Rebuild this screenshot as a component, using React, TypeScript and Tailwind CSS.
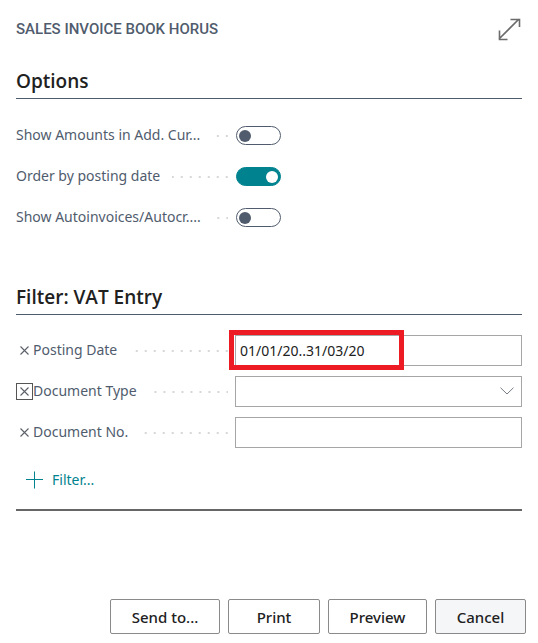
import { useState } from "react";

type Option = { id: string; label: string; on: boolean };

const INITIAL_OPTIONS: Option[] = [
  { id: "addCurrency", label: "Show Amounts in Add. Cur...", on: false },
  { id: "orderByDate", label: "Order by posting date", on: true },
  { id: "autoinvoices", label: "Show Autoinvoices/Autocr....", on: false },
];

const DOCUMENT_TYPES = ["", "Payment", "Invoice", "Credit Memo"];

function Leader() {
  return (
    <span className="mr-[7px] ml-3 h-[2px] min-w-0 flex-1 bg-[linear-gradient(to_left,#d6d7d9_2px,transparent_2px)] bg-[length:9px_2px] bg-right bg-repeat-x" />
  );
}

function SectionTitle({ children }: { children: string }) {
  return (
    <h2 className="border-b border-[#505c6d] pt-px pb-[3px] font-['Open_Sans',sans-serif] text-[19px] leading-7 font-semibold text-[#212121]">
      {children}
    </h2>
  );
}

type FilterLabelProps = {
  htmlFor: string;
  label: string;
  focused?: boolean;
  onClear: () => void;
};

function FilterLabel({ htmlFor, label, focused, onClear }: FilterLabelProps) {
  return (
    <div className="flex items-center">
      <button
        type="button"
        aria-label={`Remove ${label} filter`}
        onClick={onClear}
        className={`flex size-[17px] shrink-0 items-center justify-center border ${
          focused ? "border-[#555555]" : "border-transparent"
        }`}
      >
        <svg viewBox="0 0 9 9" className="size-[9px]" fill="none" stroke="#5c6169" strokeWidth="1.1">
          <path d="M.5 .5l8 8M8.5 .5l-8 8" />
        </svg>
      </button>
      <label htmlFor={htmlFor} className={labelClass}>
        {label}
      </label>
      <Leader />
    </div>
  );
}

const labelClass = "pb-[2px] whitespace-nowrap";
const rowClass = "grid grid-cols-[219px_minmax(0,1fr)]";
const fieldClass =
  "block h-[31px] w-full appearance-none rounded-none border border-[#a6a6a6] bg-white px-1 text-[#212121] outline-none";
const buttonClass =
  "h-[35px] rounded-xs border border-[#8a8a8a] text-[15px] font-medium text-[#212121]";

export default function App() {
  const [options, setOptions] = useState(INITIAL_OPTIONS);
  const [postingDate, setPostingDate] = useState("01/01/20..31/03/20");
  const [documentType, setDocumentType] = useState("");
  const [documentNo, setDocumentNo] = useState("");

  const toggle = (id: string) => {
    setOptions((prev) =>
      prev.map((option) =>
        option.id === id ? { ...option, on: !option.on } : option
      )
    );
  };

  return (
    <main className="min-h-screen bg-white px-4 pt-4 font-['Noto_Sans',sans-serif] text-[14px] leading-5 text-[#505c6d]">
      <header className="flex items-center justify-between">
        <h1 className="font-[Roboto,sans-serif] text-[15px] font-medium">
          SALES INVOICE BOOK HORUS
        </h1>
        <button type="button" aria-label="Expand" className="p-[1px]">
          <svg viewBox="0 0 24 24" className="size-6" fill="none" stroke="#6b6b6b" strokeWidth="1.6">
            <path d="M2 22L22 2M13.500 2.500h9V10M2.500 13.500v9H10.500" />
          </svg>
        </button>
      </header>

      <section className="mt-6">
        <SectionTitle>Options</SectionTitle>
        <div className="mt-4">
          {options.map((option) => (
            <div key={option.id} className={`${rowClass} h-[41px] items-center`}>
              <div className="flex items-center">
                <label htmlFor={option.id} className={labelClass}>
                  {option.label}
                </label>
                <Leader />
              </div>
              <input
                id={option.id}
                type="checkbox"
                role="switch"
                checked={option.on}
                onChange={() => toggle(option.id)}
                className="ml-px flex h-[19px] w-[45px] appearance-none items-center rounded-full border border-[#505c6d] px-[2px] before:size-3 before:rounded-full before:bg-[#505c6d] checked:justify-end checked:border-[#00838f] checked:bg-[#00838f] checked:before:bg-white"
              />
            </div>
          ))}
        </div>
      </section>

      <section className="mt-11">
        <SectionTitle>Filter: VAT Entry</SectionTitle>
        <div className="mt-5 flex flex-col gap-[10px]">
          <div className={rowClass}>
            <FilterLabel
              htmlFor="postingDate"
              label="Posting Date"
              onClear={() => setPostingDate("")}
            />
            <div className="relative">
              <input
                id="postingDate"
                type="text"
                value={postingDate}
                onChange={(event) => setPostingDate(event.target.value)}
                className={fieldClass}
              />
              <span className="pointer-events-none absolute -top-[5px] -left-[6px] h-10 w-[175px] border-5 border-[#ed1c24]" />
            </div>
          </div>

          <div className={rowClass}>
            <FilterLabel
              htmlFor="documentType"
              label="Document Type"
              focused
              onClear={() => setDocumentType("")}
            />
            <div className="relative">
              <select
                id="documentType"
                value={documentType}
                onChange={(event) => setDocumentType(event.target.value)}
                className={fieldClass}
              >
                {DOCUMENT_TYPES.map((type) => (
                  <option key={type} value={type}>
                    {type}
                  </option>
                ))}
              </select>
              <svg
                viewBox="0 0 14 8"
                className="pointer-events-none absolute top-[11px] right-2 h-2 w-[14px]"
                fill="none"
                stroke="#767b84"
              >
                <path d="M.5 .7L7 7L13.500 .7" />
              </svg>
            </div>
          </div>

          <div className={rowClass}>
            <FilterLabel
              htmlFor="documentNo"
              label="Document No."
              onClear={() => setDocumentNo("")}
            />
            <input
              id="documentNo"
              type="text"
              value={documentNo}
              onChange={(event) => setDocumentNo(event.target.value)}
              className={fieldClass}
            />
          </div>
        </div>

        <div className="mt-[22px] border-b-2 border-[#666666] pb-[19px]">
          <button type="button" className="ml-[10px] flex items-center gap-2 text-[#00838f]">
            <svg viewBox="0 0 18 18" className="size-[18px]" fill="none" stroke="currentColor">
              <path d="M8.500 .5v17M0 8.500h17" />
            </svg>
            Filter...
          </button>
        </div>
      </section>

      <footer className="-mr-1 mt-[88px] flex justify-end gap-2 pb-2">
        <button type="button" className={`${buttonClass} w-[110px]`}>
          Send to...
        </button>
        <button type="button" className={`${buttonClass} w-[92px]`}>
          Print
        </button>
        <button type="button" className={`${buttonClass} w-[99px]`}>
          Preview
        </button>
        <button type="button" className={`${buttonClass} w-[91px] bg-[#f5f6f8]`}>
          Cancel
        </button>
      </footer>
    </main>
  );
}
